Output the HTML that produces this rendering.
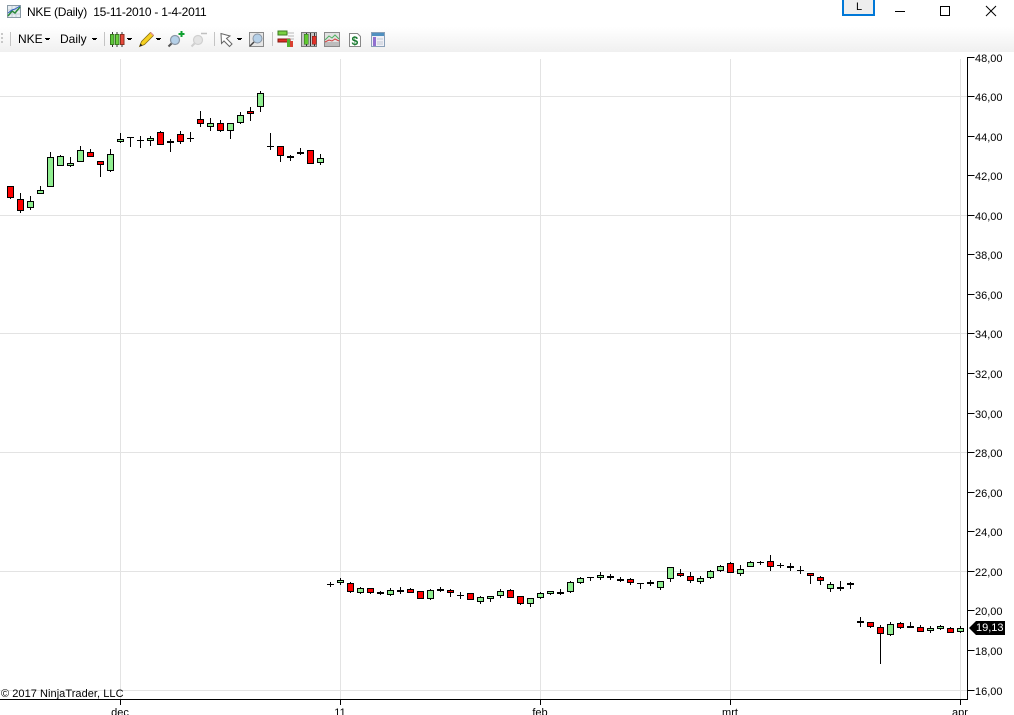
<!DOCTYPE html>
<html><head><meta charset="utf-8"><style>
html,body{margin:0;padding:0;background:#fff;overflow:hidden}
#r{position:relative;width:1014px;height:715px;overflow:hidden;background:#fff;font-family:"Liberation Sans",sans-serif;color:#000}
#tb{position:absolute;left:0;top:27px;width:1014px;height:25px;background:linear-gradient(#fff,#f0f0f0)}
.t{position:absolute;white-space:pre;line-height:14px}
svg{position:absolute;left:0;top:0}
.y{position:absolute;left:975px;font-size:11px;line-height:12px}
.x{position:absolute;top:707px;font-size:11px;line-height:12px;width:40px;text-align:center}
</style></head><body><div id="r">
<div id="tb"></div>
<div class="t" style="left:27px;top:5px;font-size:12px;letter-spacing:-.24px">NKE (Daily)  15-11-2010 - 1-4-2011</div>
<div class="t" style="left:18px;top:32px;font-size:12px">NKE</div>
<div class="t" style="left:60px;top:32px;font-size:12px">Daily</div>
<svg width="1014" height="715" viewBox="0 0 1014 715">
<!-- title icon -->
<rect x="7.500" y="5.500" width="13" height="12" fill="#e8eef2" stroke="#8a9aa6"/>
<path d="M8 10h12M8 14h12M12 6v11M16 6v11" stroke="#c5d0d8" fill="none"/>
<path d="M8 16l4-5 3 2 5-6" stroke="#2a8a3a" stroke-width="1.500" fill="none"/>
<path d="M8 13l4-3 3-1 5-3" stroke="#3060c0" stroke-width="1" fill="none"/>
<!-- L button -->
<rect x="843" y="-1" width="31" height="16" fill="#eee" stroke="#0078d7" stroke-width="2"/>
<!-- window buttons -->
<path d="M895 11.500h10" stroke="#000" fill="none"/>
<rect x="940.500" y="6.500" width="9" height="9" fill="none" stroke="#000"/>
<path d="M986 6l10 10M996 6l-10 10" stroke="#000" fill="none"/>
<!-- toolbar -->
<g shape-rendering="crispEdges">
<path d="M1 33h2v2h-2zM1 37h2v2h-2zM1 41h2v2h-2z" fill="#c8c8c8"/>
<path d="M10.500 32v14M104.500 32v14M214.500 32v14M272.500 32v14" stroke="#c4c4c4" fill="none"/>
<path d="M45 38h5v1h-1v1h-3v-1h-1zM92 38h5v1h-1v1h-3v-1h-1zM127 38h5v1h-1v1h-3v-1h-1zM156 38h5v1h-1v1h-3v-1h-1zM237 38h5v1h-1v1h-3v-1h-1z" fill="#000"/>
<!-- candles icon -->
<path d="M112.500 32v15M117 32v15M122 32v15" stroke="#333" fill="none"/>
<rect x="110.500" y="34.500" width="3.500" height="10" fill="#5cc83a" stroke="#3a7a20"/>
<rect x="115.500" y="34.500" width="3.500" height="10" fill="#6ad040" stroke="#3a7a20"/>
<rect x="120.500" y="34.500" width="3.500" height="10" fill="#e8483a" stroke="#8a3020"/>
</g>
<!-- pencil -->
<path d="M139.500 46.500l2-5 9-9 3 3-9 9z" fill="#f5d020" stroke="#8a7010" stroke-width=".8"/>
<path d="M139.500 46.500l1-3 2 2z" fill="#222"/>
<path d="M150 33l3 3 1-1-3-3z" fill="#e09090"/>
<!-- zoom plus -->
<circle cx="175" cy="40" r="4.500" fill="#b5d0e8" stroke="#8a96a4" stroke-width="1.200"/>
<path d="M171.500 43.500l-3 3" stroke="#555" stroke-width="2"/>
<path d="M181.500 31v6M178.500 34h6" stroke="#10a030" stroke-width="2"/>
<!-- zoom minus -->
<circle cx="198" cy="40" r="4.500" fill="#e4e4e4" stroke="#d0d0d0" stroke-width="1.200"/>
<path d="M194.500 43.500l-3 3" stroke="#cfcfcf" stroke-width="2"/>
<path d="M201 33.500h6" stroke="#c0c0c0" stroke-width="1.500"/>
<!-- cursor -->
<path d="M221 33.500l.5 10 2.500-2.500 5.500 5.500 2.500-2.500-5.500-5.500 3.500-2.500z" fill="#fff" stroke="#666"/>
<!-- magnifier box -->
<rect x="249.500" y="32.500" width="14" height="14" fill="#e6e6e6" stroke="#8a8a8a"/>
<circle cx="257.500" cy="38.500" r="4.500" fill="#b5d0e8" stroke="#8a96a4"/>
<path d="M254 42l-4 4" stroke="#444" stroke-width="1.500"/>
<!-- strategy icon -->
<g shape-rendering="crispEdges">
<path d="M287 33h7M288 36h6M291 39h3" stroke="#b8b8b8" fill="none"/>
<rect x="278" y="31" width="9" height="4" fill="#78d040" stroke="#3c7a20" stroke-width=".6"/>
<rect x="278" y="39" width="12" height="3" fill="#e03028" stroke="#801810" stroke-width=".6"/>
<rect x="287" y="39" width="3" height="8" fill="#50b030"/>
<rect x="290" y="41" width="3" height="6" fill="#d84030"/>
<!-- chart style icon -->
<rect x="301.500" y="32.500" width="15" height="14" fill="#c4c4c4" stroke="#777"/>
<path d="M306.500 33v13M310.500 33v13M314.500 33v13" stroke="#333" fill="none"/>
<rect x="304" y="34" width="4" height="10" fill="#60c830" stroke="#2d6a1a" stroke-width=".5"/>
<rect x="312" y="36" width="4" height="8" fill="#e03028" stroke="#7a2018" stroke-width=".5"/>
<!-- indicator icon -->
<rect x="324.500" y="32.500" width="15" height="14" fill="#e2e2e2" stroke="#8a8a8a"/>
<rect x="325" y="42" width="14" height="4" fill="#bcbcbc"/>
</g>
<path d="M325 40l4-4 3 2 3-3 4 4" stroke="#50b060" fill="none"/>
<path d="M325 42l4-2 3 1 3-2 4 2" stroke="#d04040" fill="none"/>
<!-- dollar doc -->
<path d="M349.500 33.500h8l3 3v10h-11z" fill="#fff" stroke="#888"/>
<text x="351.500" y="45" font-family="Liberation Sans" font-size="12" font-weight="bold" fill="#1a7a30">$</text>
<!-- properties icon -->
<g shape-rendering="crispEdges">
<rect x="371.500" y="32.500" width="13" height="14" fill="#f0f0f6" stroke="#8aa0b8"/>
<rect x="372" y="33" width="12" height="3" fill="#5090c0"/>
<rect x="373" y="37" width="3" height="9" fill="#9070d0"/>
<path d="M377 39h6M377 42h6M377 44h6" stroke="#c0c8d4" fill="none"/>
</g>
<g shape-rendering="crispEdges">
<!-- grid -->
<path d="M0 96.500H967M0 215.500H967M0 333.500H967M0 452.500H967M0 571.500H967M0 690.500H967M120.500 59V699M340.500 59V699M540.500 59V699M730.500 59V699M960.500 59V699" stroke="#e3e3e3" fill="none"/>
<!-- axes -->
<path d="M0 699.500H968M967.500 57V700M967.500 57.500h7M967.500 96.500h7M967.500 136.500h7M967.500 175.500h7M967.500 215.500h7M967.500 254.500h7M967.500 294.500h7M967.500 333.500h7M967.500 373.500h7M967.500 413.500h7M967.500 452.500h7M967.500 492.500h7M967.500 531.500h7M967.500 571.500h7M967.500 610.500h7M967.500 650.500h7M967.500 690.500h7M120.500 699v6M340.500 699v6M540.500 699v6M730.500 699v6M960.500 699v6" stroke="#000" fill="none"/>
<!-- wicks -->
<path stroke="#000" fill="none" d="M10.500 186V199M20.500 193V213M90.500 149V157M100.500 161V177M160.500 131V145M180.500 131V144M200.500 111V127M220.500 120V132M250.500 107V121M280.500 146V162M310.500 150V164M350.500 582V593M370.500 588V594M410.500 588V593M420.500 591V599M450.500 589V597M470.500 593V600M510.500 589V598M520.500 596V605M630.500 578V585M680.500 569V577M690.500 572V583M730.500 562V573M770.500 555V571M810.500 573V584M820.500 576V585M870.500 622V628M880.500 625V664M900.500 622V629M920.500 625V632M950.500 627V633
M30.500 196V210M40.500 186V194M50.500 152V187M60.500 155V166M70.500 157V167M80.500 146V162M110.500 149V172M120.500 133V143M150.500 136V146M210.500 118V131M230.500 123V139M240.500 112V124M260.500 91V112M320.500 154V165M340.500 578V585M360.500 587V594M390.500 588V596M430.500 589V600M480.500 596V604M490.500 596V602M500.500 589V598M530.500 598V607M540.500 592V599M550.500 591V595M570.500 581V593M580.500 577V584M600.500 572V580M660.500 581V590M670.500 567V582M700.500 576V584M710.500 570V579M720.500 565V572M740.500 565V576M750.500 561V567M830.500 582V592M890.500 622V636M930.500 626V633M940.500 625V630M960.500 626V633
M130.500 137V147M127 137.500h7M140.500 136V148M137 140.500h7M190.500 132V142M187 138.500h7M270.500 133V150M267 146.500h7M330.500 582V587M327 584.500h7M460.500 592V599M457 595.500h7M590.500 577V581M587 577.500h7M640.500 583V589M637 583.500h7M760.500 561V565M757 562.500h7M780.500 563V568M777 565.500h7M800.500 566V574M797 570.500h7
M170.500 139V152M167 141.500h7M167 142.500h7M290.500 155V161M287 156.500h7M287 157.500h7M300.500 148V155M297 152.500h7M297 153.500h7M380.500 591V595M377 592.500h7M377 593.500h7M400.500 587V594M397 590.500h7M397 591.500h7M440.500 587V592M437 589.500h7M437 590.500h7M560.500 589V595M557 592.500h7M557 593.500h7M610.500 574V580M607 576.500h7M607 577.500h7M620.500 577V582M617 579.500h7M617 580.500h7M650.500 580V586M647 582.500h7M647 583.500h7M790.500 563V571M787 566.500h7M787 567.500h7M840.500 581V591M837 587.500h7M837 588.500h7M850.500 582V589M847 583.500h7M847 584.500h7M860.500 617V627M857 621.500h7M857 622.500h7M910.500 622V628M907 626.500h7M907 627.500h7"/>
<!-- red bodies -->
<path fill="#f00" stroke="#000" d="M7.500 186.500h6v11h-6zM17.500 199.500h6v11h-6zM87.500 152.500h6v4h-6zM97.500 161.500h6v3h-6zM157.500 132.500h6v12h-6zM177.500 134.500h6v7h-6zM197.500 119.500h6v4h-6zM217.500 123.500h6v7h-6zM247.500 111.500h6v2h-6zM277.500 146.500h6v9h-6zM307.500 150.500h6v13h-6zM347.500 583.500h6v8h-6zM367.500 588.500h6v4h-6zM407.500 589.500h6v3h-6zM417.500 591.500h6v7h-6zM447.500 590.500h6v2h-6zM467.500 593.500h6v6h-6zM507.500 590.500h6v7h-6zM517.500 596.500h6v7h-6zM627.500 579.500h6v3h-6zM677.500 573.500h6v2h-6zM687.500 576.500h6v4h-6zM727.500 563.500h6v9h-6zM767.500 561.500h6v5h-6zM807.500 573.500h6v2h-6zM817.500 577.500h6v3h-6zM867.500 622.500h6v4h-6zM877.500 627.500h6v6h-6zM897.500 623.500h6v4h-6zM917.500 627.500h6v4h-6zM947.500 628.500h6v4h-6z"/>
<!-- green bodies -->
<path fill="#90ee90" stroke="#000" d="M27.500 201.500h6v6h-6zM37.500 190.500h6v3h-6zM47.500 157.500h6v29h-6zM57.500 156.500h6v9h-6zM67.500 163.500h6v2h-6zM77.500 150.500h6v11h-6zM107.500 154.500h6v16h-6zM117.500 139.500h6v2h-6zM147.500 138.500h6v2h-6zM207.500 123.500h6v3h-6zM227.500 123.500h6v7h-6zM237.500 115.500h6v7h-6zM257.500 93.500h6v13h-6zM317.500 158.500h6v4h-6zM337.500 580.500h6v2h-6zM357.500 588.500h6v4h-6zM387.500 590.500h6v4h-6zM427.500 590.500h6v8h-6zM477.500 597.500h6v4h-6zM487.500 596.500h6v2h-6zM497.500 591.500h6v4h-6zM527.500 598.500h6v5h-6zM537.500 593.500h6v4h-6zM547.500 591.500h6v2h-6zM567.500 582.500h6v9h-6zM577.500 578.500h6v4h-6zM597.500 575.500h6v2h-6zM657.500 581.500h6v6h-6zM667.500 567.500h6v11h-6zM697.500 578.500h6v3h-6zM707.500 571.500h6v6h-6zM717.500 566.500h6v4h-6zM737.500 569.500h6v4h-6zM747.500 562.500h6v4h-6zM827.500 584.500h6v4h-6zM887.500 624.500h6v10h-6zM927.500 628.500h6v2h-6zM937.500 626.500h6v2h-6zM957.500 628.500h6v3h-6z"/>
</g>
<!-- last price tag -->
<path d="M969 628l7-7h29v14h-29z" fill="#000"/>
</svg>
<div class="t" style="left:856px;top:1px;font-size:11px;line-height:12px">L</div>
<div class="y" style="top:53px">48,00</div>
<div class="y" style="top:92px">46,00</div>
<div class="y" style="top:132px">44,00</div>
<div class="y" style="top:171px">42,00</div>
<div class="y" style="top:211px">40,00</div>
<div class="y" style="top:250px">38,00</div>
<div class="y" style="top:290px">36,00</div>
<div class="y" style="top:329px">34,00</div>
<div class="y" style="top:369px">32,00</div>
<div class="y" style="top:409px">30,00</div>
<div class="y" style="top:448px">28,00</div>
<div class="y" style="top:488px">26,00</div>
<div class="y" style="top:527px">24,00</div>
<div class="y" style="top:567px">22,00</div>
<div class="y" style="top:606px">20,00</div>
<div class="y" style="top:646px">18,00</div>
<div class="y" style="top:686px">16,00</div>
<div class="y" style="top:622px;left:976px;color:#fff">19,13</div>
<div class="t" style="left:1px;top:688px;font-size:11px;line-height:12px;letter-spacing:.05px">© 2017 NinjaTrader, LLC</div>
<div class="x" style="left:100px">dec</div>
<div class="x" style="left:320px">11</div>
<div class="x" style="left:520px">feb</div>
<div class="x" style="left:710px">mrt</div>
<div class="x" style="left:940px">apr</div>
</div></body></html>
